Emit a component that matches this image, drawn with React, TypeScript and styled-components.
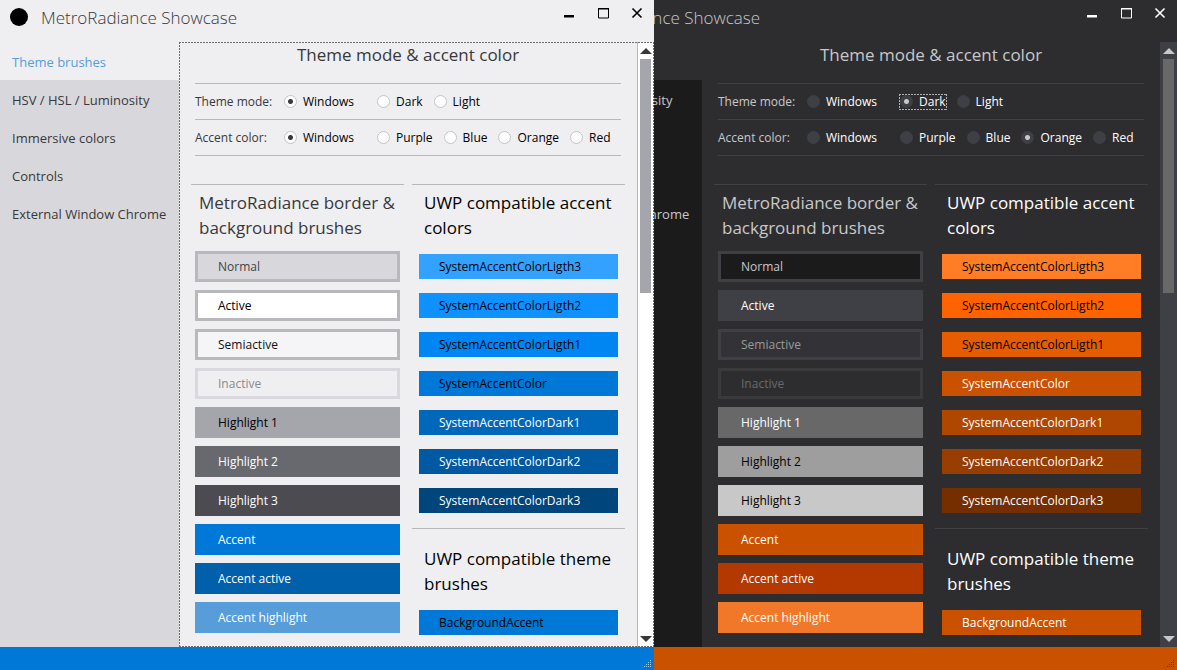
import React from "react";
import styled, { createGlobalStyle, css, ThemeProvider } from "styled-components";

const GlobalStyle = createGlobalStyle`
  *, *::before, *::after { box-sizing: border-box; }
  body { margin: 0; }
`;

type Swatch = { label: string; bg: string; fg: string; border?: string };

interface Palette {
  bg: string;
  nav: string;
  title: string;
  text: string;
  strong: string;
  icon: string;
  selected: string;
  line: string;
  status: string;
  gripColor: string;
  scrollBg: string;
  scrollLine: string;
  thumb: string;
  arrow: string;
  radioBg: string;
  radioBorder: string;
  radioDot: string;
  focus: string;
}

const lightTheme: Palette = {
  bg: "#efeff2",
  nav: "#d8d8dc",
  title: "#38383a",
  text: "#38383a",
  strong: "#000000",
  icon: "#000000",
  selected: "#569dda",
  line: "#b7b8bb",
  status: "#0078d7",
  gripColor: "#9cc8ee",
  scrollBg: "#ffffff",
  scrollLine: "#b7b8bb",
  thumb: "#a5a6ab",
  arrow: "#38383a",
  radioBg: "#ffffff",
  radioBorder: "#c3c3c9",
  radioDot: "#38383a",
  focus: "#6c6c70",
};

const darkTheme: Palette = {
  bg: "#2d2d30",
  nav: "#1b1b1c",
  title: "#c8c8c8",
  text: "#c8c8c8",
  strong: "#ffffff",
  icon: "#ffffff",
  selected: "#f27829",
  line: "#424245",
  status: "#ca5100",
  gripColor: "#4a3a30",
  scrollBg: "#3f3f46",
  scrollLine: "#3f3f46",
  thumb: "#686868",
  arrow: "#c8c8c8",
  radioBg: "#3f3f46",
  radioBorder: "#3f3f46",
  radioDot: "#c8c8c8",
  focus: "#b0b0b0",
};

const lightBrushes: Swatch[] = [
  { label: "Normal", bg: "#d8d8dc", fg: "#444444", border: "#b8b8be" },
  { label: "Active", bg: "#ffffff", fg: "#000000", border: "#b8b8be" },
  { label: "Semiactive", bg: "#f5f5f8", fg: "#111111", border: "#b8b8be" },
  { label: "Inactive", bg: "#efeff2", fg: "#8a8a8c", border: "#d8d8de" },
  { label: "Highlight 1", bg: "#a5a6ab", fg: "#000000" },
  { label: "Highlight 2", bg: "#68696f", fg: "#ffffff" },
  { label: "Highlight 3", bg: "#4b4b51", fg: "#ffffff" },
  { label: "Accent", bg: "#0078d7", fg: "#ffffff" },
  { label: "Accent active", bg: "#0060ac", fg: "#ffffff" },
  { label: "Accent highlight", bg: "#569dda", fg: "#ffffff" },
];

const darkBrushes: Swatch[] = [
  { label: "Normal", bg: "#1b1b1c", fg: "#c8c8c8", border: "#3f3f46" },
  { label: "Active", bg: "#3f3f46", fg: "#ffffff" },
  { label: "Semiactive", bg: "#333337", fg: "#999999", border: "#3f3f46" },
  { label: "Inactive", bg: "#2d2d30", fg: "#6a6a6a", border: "#3a3a3d" },
  { label: "Highlight 1", bg: "#686868", fg: "#ffffff" },
  { label: "Highlight 2", bg: "#9e9e9e", fg: "#000000" },
  { label: "Highlight 3", bg: "#c8c8c8", fg: "#000000" },
  { label: "Accent", bg: "#ca5100", fg: "#ffffff" },
  { label: "Accent active", bg: "#b33900", fg: "#ffffff" },
  { label: "Accent highlight", bg: "#f27829", fg: "#ffffff" },
];

const lightAccents: Swatch[] = [
  { label: "SystemAccentColorLigth3", bg: "#32a1ff", fg: "#000000" },
  { label: "SystemAccentColorLigth2", bg: "#0f91ff", fg: "#000000" },
  { label: "SystemAccentColorLigth1", bg: "#0086f2", fg: "#000000" },
  { label: "SystemAccentColor", bg: "#0078d7", fg: "#000000" },
  { label: "SystemAccentColorDark1", bg: "#0068bb", fg: "#ffffff" },
  { label: "SystemAccentColorDark2", bg: "#0059a1", fg: "#ffffff" },
  { label: "SystemAccentColorDark3", bg: "#00457b", fg: "#ffffff" },
];

const darkAccents: Swatch[] = [
  { label: "SystemAccentColorLigth3", bg: "#ff7d25", fg: "#000000" },
  { label: "SystemAccentColorLigth2", bg: "#ff6300", fg: "#000000" },
  { label: "SystemAccentColorLigth1", bg: "#e65c00", fg: "#000000" },
  { label: "SystemAccentColor", bg: "#ca5100", fg: "#ffffff" },
  { label: "SystemAccentColorDark1", bg: "#b04700", fg: "#ffffff" },
  { label: "SystemAccentColorDark2", bg: "#983d00", fg: "#ffffff" },
  { label: "SystemAccentColorDark3", bg: "#742e00", fg: "#ffffff" },
];

/* Keyboard focus rectangle: 2px dashes with 1px gaps along all four edges. */
const focusRect = css`
  --h: repeating-linear-gradient(90deg, ${(p) => p.theme.focus} 0 2px, transparent 2px 3px);
  --v: repeating-linear-gradient(180deg, ${(p) => p.theme.focus} 0 2px, transparent 2px 3px);
  background:
    var(--h) top / 100% 1px no-repeat,
    var(--h) bottom / 100% 1px no-repeat,
    var(--v) left / 1px 100% no-repeat,
    var(--v) right / 1px 100% no-repeat;
  pointer-events: none;
`;

const Desktop = styled.main`
  display: grid;
  grid-template-columns: 523fr 131fr 523fr;
  min-height: 100vh;
  font-family: "Open Sans", "Noto Sans", sans-serif;
  font-size: 12px;
  line-height: 16px;
`;

const Window = styled.section<{ $column: string; $front?: boolean }>`
  grid-row: 1;
  grid-column: ${(p) => p.$column};
  z-index: ${(p) => (p.$front ? 2 : 1)};
  display: flex;
  flex-direction: column;
  min-width: 0;
  background: ${(p) => p.theme.bg};
  color: ${(p) => p.theme.text};
`;

const TitleBar = styled.header`
  display: flex;
  align-items: flex-start;
  height: 42px;
`;

const AppIcon = styled.svg`
  width: 18px;
  height: 18px;
  margin: 8px 13px 0 10px;
`;

const Title = styled.h1`
  flex: 1;
  margin: 0;
  padding-top: 5px;
  font-size: 17px;
  line-height: 25px;
  font-weight: 300;
  white-space: nowrap;
  color: ${(p) => p.theme.title};
`;

const CaptionButton = styled.button`
  display: flex;
  align-items: center;
  justify-content: center;
  width: 34px;
  height: 26px;
  padding: 0;
  border: 0;
  background: transparent;
  color: ${(p) => p.theme.icon};
`;

const Body = styled.div`
  display: flex;
  flex: 1;
  min-height: 0;
`;

const Nav = styled.nav`
  flex: 0 0 179px;
  background: ${(p) => p.theme.nav};
`;

const NavLink = styled.a<{ $selected?: boolean }>`
  display: block;
  padding: 2px 12px 0;
  font-size: 13px;
  line-height: 36px;
  white-space: nowrap;
  text-decoration: none;
  color: ${(p) => (p.$selected ? p.theme.selected : p.theme.text)};
  background: ${(p) => (p.$selected ? p.theme.bg : "transparent")};
`;

const ScrollView = styled.div`
  position: relative;
  display: flex;
  flex: 1;
  min-width: 0;
`;

const FocusFrame = styled.div`
  position: absolute;
  inset: 0;
  ${focusRect}
`;

const Content = styled.div`
  flex: 1;
  min-width: 0;
  padding: 0 12px;
`;

const PageTitle = styled.h2`
  margin: 0 0 15px;
  font-size: 17px;
  line-height: 26px;
  font-weight: 400;
  text-align: center;
`;

const Form = styled.div`
  margin: 0 4px 28px;
  border-top: 1px solid ${(p) => p.theme.line};
`;

const FormRow = styled.fieldset`
  display: flex;
  align-items: center;
  height: 36px;
  margin: 0;
  padding: 0;
  border: 0;
  border-bottom: 1px solid ${(p) => p.theme.line};
`;

const RowLabel = styled.span`
  flex: 0 0 89px;
`;

const FirstOption = styled.div`
  display: flex;
  flex: 0 0 93px;
`;

const Options = styled.div`
  display: flex;
  gap: 11px;
`;

const Option = styled.label<{ $focused?: boolean }>`
  position: relative;
  display: flex;
  align-items: center;
  gap: 6px;
  height: 14px;
  color: ${(p) => p.theme.strong};

  ${(p) =>
    p.$focused &&
    css`
      &::after {
        content: "";
        position: absolute;
        inset: -1px;
        ${focusRect}
      }
    `}
`;

const Radio = styled.input`
  appearance: none;
  flex: none;
  width: 13px;
  height: 13px;
  margin: 0;
  border: 1px solid ${(p) => p.theme.radioBorder};
  border-radius: 50%;
  background: ${(p) => p.theme.radioBg};
  outline: none;

  &:checked {
    background: radial-gradient(circle, ${(p) => p.theme.radioDot} 2px, ${(p) => p.theme.radioBg} 3px);
  }
`;

const Columns = styled.div`
  display: grid;
  grid-template-columns: 1fr 1fr;
  gap: 8px;
`;

const Column = styled.div`
  min-width: 0;
`;

const Group = styled.section<{ $spaced?: boolean }>`
  border-top: 1px solid ${(p) => p.theme.line};
  margin-top: ${(p) => (p.$spaced ? 15 : 0)}px;
  padding-top: ${(p) => (p.$spaced ? 17 : 5)}px;
`;

const GroupTitle = styled.h3<{ $strong?: boolean }>`
  margin: 0;
  padding-left: ${(p) => (p.$strong ? 12 : 8)}px;
  font-size: 17px;
  line-height: 25px;
  font-weight: 400;
  color: ${(p) => (p.$strong ? p.theme.strong : p.theme.text)};
`;

const BrushList = styled.ul`
  display: grid;
  gap: 8px;
  margin: 0;
  padding: 11px 4px 0;
  list-style: none;
`;

const Brush = styled.li<{ $bg: string; $fg: string; $border: string }>`
  padding: 0 20px;
  border: 3px solid ${(p) => p.$border};
  line-height: 25px;
  background: ${(p) => p.$bg};
  color: ${(p) => p.$fg};
`;

const AccentList = styled.ul`
  display: grid;
  gap: 14px;
  margin: 0;
  padding: 14px 7px 0;
  list-style: none;
`;

const Accent = styled.li<{ $bg: string; $fg: string }>`
  padding: 0 20px;
  line-height: 25px;
  background: ${(p) => p.$bg};
  color: ${(p) => p.$fg};
`;

const ScrollBar = styled.div`
  display: flex;
  flex-direction: column;
  align-items: center;
  flex: 0 0 17px;
  background: ${(p) => p.theme.scrollBg};
  box-shadow: inset 1px 0 ${(p) => p.theme.scrollLine};
`;

const ScrollArrow = styled.button`
  display: flex;
  align-items: center;
  justify-content: center;
  width: 15px;
  height: 17px;
  padding: 0;
  border: 0;
  background: transparent;
  color: ${(p) => p.theme.arrow};
`;

const Track = styled.div`
  flex: 1;
  width: 11px;
`;

const Thumb = styled.div`
  height: 41%;
  background: ${(p) => p.theme.thumb};
`;

const StatusBar = styled.footer`
  display: flex;
  align-items: flex-end;
  justify-content: flex-end;
  height: 23px;
  padding: 3px;
  background: ${(p) => p.theme.status};
  color: ${(p) => p.theme.gripColor};
`;

const gripDots = [
  [7, 0],
  [5, 2], [7, 2],
  [3, 4], [5, 4], [7, 4],
  [1, 6], [3, 6], [5, 6], [7, 6],
];

function Grip() {
  return (
    <svg width="8" height="7" viewBox="0 0 8 7" fill="currentColor" shapeRendering="crispEdges" aria-hidden="true">
      {gripDots.map(([x, y]) => (
        <rect key={`${x}-${y}`} x={x} y={y} width="1" height="1" />
      ))}
    </svg>
  );
}

function CaptionButtons() {
  return (
    <>
      <CaptionButton aria-label="Minimize">
        <svg width="12" height="12" viewBox="0 0 12 12" aria-hidden="true">
          <path d="M1 8h10v2.500H1z" fill="currentColor" />
        </svg>
      </CaptionButton>
      <CaptionButton aria-label="Maximize">
        <svg width="12" height="12" viewBox="0 0 12 12" fill="none" stroke="currentColor" aria-hidden="true">
          <path d="M1.500 1v10h10V1M1 2h11" />
          <path d="M1 1.500h11" />
        </svg>
      </CaptionButton>
      <CaptionButton aria-label="Close">
        <svg width="12" height="12" viewBox="0 0 12 12" stroke="currentColor" strokeWidth="1.600" aria-hidden="true">
          <path d="M1.500 1.500l9 9M10.500 1.500l-9 9" />
        </svg>
      </CaptionButton>
    </>
  );
}

const navItems = ["Theme brushes", "HSV / HSL / Luminosity", "Immersive colors", "Controls", "External Window Chrome"];

interface RadioRowProps {
  label: string;
  name: string;
  options: string[];
  checked: string;
  focused?: string;
}

function RadioRow({ label, name, options, checked, focused }: RadioRowProps) {
  const option = (text: string) => (
    <Option key={text} $focused={text === focused}>
      <Radio type="radio" name={name} defaultChecked={text === checked} />
      {text}
    </Option>
  );
  return (
    <FormRow aria-label={label}>
      <RowLabel>{label}</RowLabel>
      <FirstOption>{option(options[0])}</FirstOption>
      <Options>{options.slice(1).map(option)}</Options>
    </FormRow>
  );
}

interface ShowcaseProps {
  id: string;
  palette: Palette;
  column: string;
  front?: boolean;
  mode: string;
  accent: string;
  focusedMode?: string;
  brushes: Swatch[];
  accents: Swatch[];
}

function Showcase({ id, palette, column, front, mode, accent, focusedMode, brushes, accents }: ShowcaseProps) {
  const base = accents[3];
  return (
    <ThemeProvider theme={palette}>
      <Window $column={column} $front={front}>
        <TitleBar>
          <AppIcon viewBox="0 0 18 18" aria-hidden="true">
            <circle cx="9" cy="9" r="9" />
          </AppIcon>
          <Title>MetroRadiance Showcase</Title>
          <CaptionButtons />
        </TitleBar>
        <Body>
          <Nav>
            {navItems.map((item, i) => (
              <NavLink key={item} href="#" $selected={i === 0}>
                {item}
              </NavLink>
            ))}
          </Nav>
          <ScrollView>
            <Content>
              <PageTitle>Theme mode &amp; accent color</PageTitle>
              <Form>
                <RadioRow
                  label="Theme mode:"
                  name={`${id}-mode`}
                  options={["Windows", "Dark", "Light"]}
                  checked={mode}
                  focused={focusedMode}
                />
                <RadioRow
                  label="Accent color:"
                  name={`${id}-accent`}
                  options={["Windows", "Purple", "Blue", "Orange", "Red"]}
                  checked={accent}
                />
              </Form>
              <Columns>
                <Column>
                  <Group>
                    <GroupTitle>MetroRadiance border &amp; background brushes</GroupTitle>
                    <BrushList>
                      {brushes.map((b) => (
                        <Brush key={b.label} $bg={b.bg} $fg={b.fg} $border={b.border ?? b.bg}>
                          {b.label}
                        </Brush>
                      ))}
                    </BrushList>
                  </Group>
                </Column>
                <Column>
                  <Group>
                    <GroupTitle $strong>UWP compatible accent colors</GroupTitle>
                    <AccentList>
                      {accents.map((a) => (
                        <Accent key={a.label} $bg={a.bg} $fg={a.fg}>
                          {a.label}
                        </Accent>
                      ))}
                    </AccentList>
                  </Group>
                  <Group $spaced>
                    <GroupTitle $strong>UWP compatible theme brushes</GroupTitle>
                    <AccentList>
                      <Accent $bg={base.bg} $fg={base.fg}>
                        BackgroundAccent
                      </Accent>
                    </AccentList>
                  </Group>
                </Column>
              </Columns>
            </Content>
            <ScrollBar>
              <ScrollArrow aria-label="Scroll up">
                <svg width="12" height="6" viewBox="0 0 12 6" fill="currentColor" aria-hidden="true">
                  <path d="M0 6L6 0l6 6z" />
                </svg>
              </ScrollArrow>
              <Track>
                <Thumb />
              </Track>
              <ScrollArrow aria-label="Scroll down">
                <svg width="12" height="6" viewBox="0 0 12 6" fill="currentColor" aria-hidden="true">
                  <path d="M0 0l6 6 6-6z" />
                </svg>
              </ScrollArrow>
            </ScrollBar>
            {front && <FocusFrame />}
          </ScrollView>
        </Body>
        <StatusBar>
          <Grip />
        </StatusBar>
      </Window>
    </ThemeProvider>
  );
}

export default function App() {
  return (
    <>
      <GlobalStyle />
      <Desktop>
        <Showcase
          id="light"
          palette={lightTheme}
          column="1 / 3"
          front
          mode="Windows"
          accent="Windows"
          brushes={lightBrushes}
          accents={lightAccents}
        />
        <Showcase
          id="dark"
          palette={darkTheme}
          column="2 / 4"
          mode="Dark"
          accent="Orange"
          focusedMode="Dark"
          brushes={darkBrushes}
          accents={darkAccents}
        />
      </Desktop>
    </>
  );
}
